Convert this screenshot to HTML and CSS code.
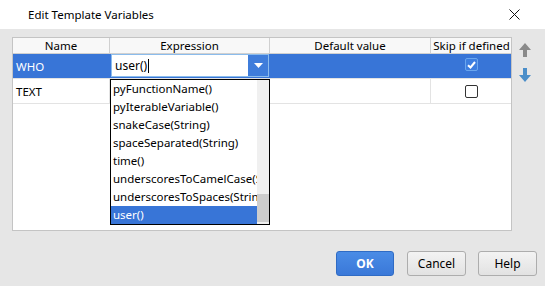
FILE: index.html
```html
<!DOCTYPE html>
<html lang="en">
<head>
    <meta charset="UTF-8">
    <title>Edit Template Variables</title>
    <link rel="stylesheet" href="styles.css">
</head>
<body>
    <div class="titlebar">
        <span class="title">Edit Template Variables</span>
        <svg class="close" width="11" height="11" viewBox="0 0 11 11">
            <path d="M0.5 0.5 L10.5 10.5 M10.5 0.5 L0.5 10.5" stroke="#111" stroke-width="1" fill="none"/>
        </svg>
    </div>
    <div class="content">
        <div class="main">
            <div class="panel">
                <div class="row head">
                    <div class="cell">Name</div>
                    <div class="cell">Expression</div>
                    <div class="cell">Default value</div>
                    <div class="cell">Skip if defined</div>
                </div>
                <div class="row selected">
                    <div class="cell name">WHO</div>
                    <div class="cell editor">
                        <div class="combo">
                            <span class="combo-field">user()<span class="caret"></span></span>
                            <span class="combo-btn">
                                <svg width="9" height="5" viewBox="0 0 9 5"><path d="M0 0 H9 L4.5 5 Z" fill="#fff"/></svg>
                            </span>
                        </div>
                    </div>
                    <div class="cell"></div>
                    <div class="cell check">
                        <span class="checkbox checked">
                            <svg width="9" height="8" viewBox="0 0 9 8"><path d="M1 4.2 L3.5 6.5 L8 1" stroke="#fff" stroke-width="2" fill="none"/></svg>
                        </span>
                    </div>
                </div>
                <div class="row">
                    <div class="cell name">TEXT</div>
                    <div class="cell"></div>
                    <div class="cell"></div>
                    <div class="cell check"><span class="checkbox"></span></div>
                </div>

                <div class="popup">
                    <ul class="items">
                        <li>pyFunctionName()</li>
                        <li>pyIterableVariable()</li>
                        <li>snakeCase(String)</li>
                        <li>spaceSeparated(String)</li>
                        <li>time()</li>
                        <li>underscoresToCamelCase(String)</li>
                        <li>underscoresToSpaces(String)</li>
                        <li class="active">user()</li>
                    </ul>
                    <div class="scrollbar"><div class="thumb"></div></div>
                </div>
            </div>
            <div class="side">
                <svg class="arrow" width="12" height="14" viewBox="0 0 12 14">
                    <path d="M6 0 L12 7 H8 V14 H4 V7 H0 Z" fill="#8a8a8a"/>
                </svg>
                <svg class="arrow down" width="12" height="14" viewBox="0 0 12 14">
                    <path d="M4 0 H8 V7 H12 L6 14 L0 7 H4 Z" fill="#4b8ec9"/>
                </svg>
            </div>
        </div>
        <div class="footer">
            <button class="btn primary">OK</button>
            <button class="btn">Cancel</button>
            <button class="btn">Help</button>
        </div>
    </div>
</body>
</html>
```

FILE: styles.css
```css
* {
    margin: 0;
    padding: 0;
    box-sizing: border-box;
}
html, body {
    width: 545px;
    height: 286px;
    overflow: hidden;
}
body {
    font-family: "Noto Sans", "Open Sans", sans-serif;
    font-size: 11.5px;
    color: #000;
    background-color: #e6e6e6;
    display: flex;
    flex-direction: column;
}
.titlebar {
    height: 29px;
    background-color: #fff;
    display: flex;
    align-items: center;
    padding-left: 28px;
    padding-right: 25px;
}
.title {
    flex: 1;
    font-size: 11.5px;
    color: #000;
}
.content {
    flex: 1;
    padding: 8px 0 10px 12px;
    display: flex;
    flex-direction: column;
}
.main {
    display: flex;
    height: 194px;
}
.panel {
    position: relative;
    width: 500px;
    height: 194px;
    background-color: #fff;
    border: 1px solid #c4c4c4;
}
.row {
    display: grid;
    grid-template-columns: 97px 160px 161px 81px;
    height: 25px;
    border-bottom: 1px solid #e3e3e3;
}
.row .cell {
    border-right: 1px solid #e3e3e3;
    display: flex;
    align-items: center;
    overflow: hidden;
    white-space: nowrap;
}
.row .cell:last-child {
    border-right: none;
}
.row.head {
    height: 16px;
    background-color: #f8f8f8;
    border-bottom: 1px solid #d0d0d0;
}
.row.head .cell {
    justify-content: center;
    border-right-color: #d0d0d0;
    line-height: 15px;
}
.row.selected {
    background-color: #3875d7;
    color: #fff;
}
.row.selected .cell {
    border-right-color: #3875d7;
}
.cell.name {
    padding-left: 3px;
}
.cell.check {
    justify-content: center;
}
.cell.editor {
    align-items: flex-start;
    padding-left: 1px;
}
.combo {
    display: flex;
    width: 159px;
    height: 23px;
    border: 1px solid #8bbcec;
    color: #000;
}
.combo-field {
    flex: 1;
    background-color: #fff;
    padding-left: 3px;
    display: flex;
    align-items: center;
    font-size: 12px;
}
.caret {
    width: 1px;
    height: 14px;
    background-color: #000;
    margin-left: 1px;
}
.combo-btn {
    width: 20px;
    display: flex;
    align-items: center;
    justify-content: center;
    background-color: #3f7ddb;
}
.checkbox {
    width: 13px;
    height: 13px;
    border: 1px solid #333;
    border-radius: 2px;
    background-color: #fff;
    display: flex;
    align-items: center;
    justify-content: center;
}
.checkbox.checked {
    border-color: #6aa6ee;
    background-color: #3d7ee0;
    margin-top: -3px;
}
.popup {
    position: absolute;
    left: 97px;
    top: 41px;
    width: 160px;
    height: 146px;
    border: 1px solid #000;
    background-color: #fff;
    display: flex;
}
.items {
    list-style: none;
    width: 146px;
    overflow: hidden;
}
.items li {
    height: 18px;
    line-height: 18px;
    padding-left: 2px;
    white-space: nowrap;
    overflow: hidden;
}
.items li.active {
    background-color: #3875d7;
    color: #fff;
}
.scrollbar {
    width: 12px;
    background-color: #f0f0f0;
    display: flex;
    flex-direction: column;
    justify-content: flex-end;
}
.thumb {
    height: 28px;
    margin-bottom: 2px;
    background-color: #cdcdcd;
}
.side {
    display: flex;
    flex-direction: column;
    padding-left: 7px;
    padding-top: 6px;
}
.arrow.down {
    margin-top: 11px;
}
.footer {
    margin-top: 20px;
    display: flex;
    justify-content: flex-end;
    gap: 12px;
    padding-right: 8px;
}
.btn {
    width: 59px;
    height: 25px;
    font-family: "Noto Sans", "Open Sans", sans-serif;
    font-size: 12px;
    color: #000;
    border: 1px solid #adadad;
    border-radius: 3px;
    background: linear-gradient(#f3f3f3, #e2e2e2);
}
.btn.primary {
    width: 58px;
    margin-right: 1px;
    color: #fff;
    font-weight: bold;
    border-color: #2f6bc4;
    background: linear-gradient(#4a8ce6, #3a78d8);
}
```
